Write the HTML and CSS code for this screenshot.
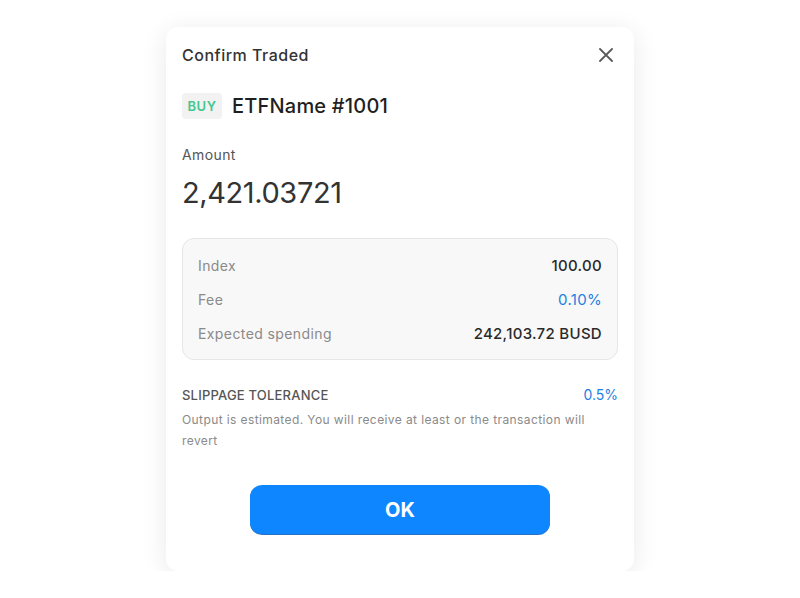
FILE: index.html
```html
<!DOCTYPE html>
<html lang="en">
<head>
  <meta charset="UTF-8">
  <meta name="viewport" content="width=device-width, initial-scale=1.0">
  <title>Confirm Traded</title>
  <link rel="stylesheet" href="styles.css">
</head>
<body>
  <div class="modal">
    <div class="modal-header">
      <h2>Confirm Traded</h2>
      <button class="close" aria-label="Close">
        <svg width="14" height="14" viewBox="0 0 14 14">
          <path d="M1 1L13 13M13 1L1 13" stroke="#5a5a5a" stroke-width="1.8" stroke-linecap="round"/>
        </svg>
      </button>
    </div>

    <div class="asset">
      <span class="badge">BUY</span>
      <span class="asset-name">ETFName #1001</span>
    </div>

    <div class="amount">
      <div class="amount-label">Amount</div>
      <div class="amount-value">2,421.03721</div>
    </div>

    <div class="details">
      <div class="row">
        <span class="label">Index</span>
        <span class="value">100.00</span>
      </div>
      <div class="row">
        <span class="label">Fee</span>
        <span class="value blue">0.10%</span>
      </div>
      <div class="row">
        <span class="label">Expected spending</span>
        <span class="value">242,103.72 BUSD</span>
      </div>
    </div>

    <div class="slippage">
      <div class="slippage-head">
        <span class="slippage-title">SLIPPAGE TOLERANCE</span>
        <span class="blue">0.5%</span>
      </div>
      <p>Output is estimated. You will receive at least or the transaction will revert</p>
    </div>

    <div class="actions">
      <button class="ok">OK</button>
    </div>
  </div>
</body>
</html>
```

FILE: styles.css
```css
body {
  margin: 0;
  font-family: Inter, "Noto Sans", sans-serif;
  background-color: #ffffff;
  color: #333;
  display: flex;
  justify-content: center;
}

.modal {
  width: 468px;
  height: 544px;
  box-sizing: border-box;
  margin-top: 27px;
  padding: 0 16px;
  background-color: #ffffff;
  border-radius: 12px;
  box-shadow: 0 4px 26px rgba(0, 0, 0, 0.09);
}

.modal-header {
  display: flex;
  justify-content: space-between;
  align-items: center;
  height: 56px;
}

.modal-header h2 {
  margin: 0;
  font-size: 16px;
  font-weight: 500;
  letter-spacing: 0.5px;
  color: #333;
}

.close {
  border: none;
  background: none;
  padding: 0;
  margin-right: 5px;
  cursor: pointer;
  display: flex;
}

.asset {
  display: flex;
  align-items: center;
  gap: 10px;
  margin-top: 10px;
}

.badge {
  display: inline-block;
  width: 40px;
  height: 26px;
  line-height: 26px;
  text-align: center;
  background-color: #f2f2f2;
  border-radius: 4px;
  color: #43c78e;
  font-size: 13px;
  font-weight: 600;
  letter-spacing: 0.5px;
}

.asset-name {
  font-size: 20px;
  font-weight: 500;
  letter-spacing: 0.2px;
  color: #1f1f1f;
}

.amount {
  margin-top: 26px;
}

.amount-label {
  font-size: 14px;
  line-height: 20px;
  letter-spacing: 0.4px;
  color: #555;
}

.amount-value {
  margin-top: 8px;
  font-size: 29px;
  line-height: 40px;
  letter-spacing: -0.4px;
  color: #333;
}

.details {
  margin-top: 25px;
  border: 1px solid #e6e6e6;
  border-radius: 12px;
  background-color: #f8f8f8;
  padding: 17px 15px 15px;
  display: flex;
  flex-direction: column;
  gap: 14px;
}

.row {
  display: flex;
  justify-content: space-between;
  align-items: center;
  line-height: 20px;
}

.label {
  font-size: 14px;
  letter-spacing: 0.4px;
  color: #8a8a8a;
}

.value {
  font-size: 15px;
  font-weight: 500;
  letter-spacing: 0.3px;
  color: #2a2a2a;
}

.blue {
  color: #1e80e0;
  font-weight: 400;
}

.slippage {
  margin-top: 25px;
}

.slippage-head {
  display: flex;
  justify-content: space-between;
  align-items: center;
  line-height: 20px;
  font-size: 13px;
}

.slippage-head .blue {
  font-size: 14px;
}

.slippage-title {
  font-weight: 500;
  letter-spacing: 0.2px;
  color: #555;
}

.slippage p {
  margin: 4px 0 0;
  font-size: 12px;
  line-height: 21px;
  letter-spacing: 0.4px;
  color: #8a8a8a;
}

.actions {
  display: flex;
  justify-content: center;
  margin-top: 34px;
}

.ok {
  width: 300px;
  height: 49px;
  border: none;
  border-radius: 12px;
  background-color: #0d86ff;
  box-shadow: 0 1px 0 #2a72c7;
  color: #ffffff;
  font-family: inherit;
  font-size: 20px;
  font-weight: 700;
  cursor: pointer;
}
```
